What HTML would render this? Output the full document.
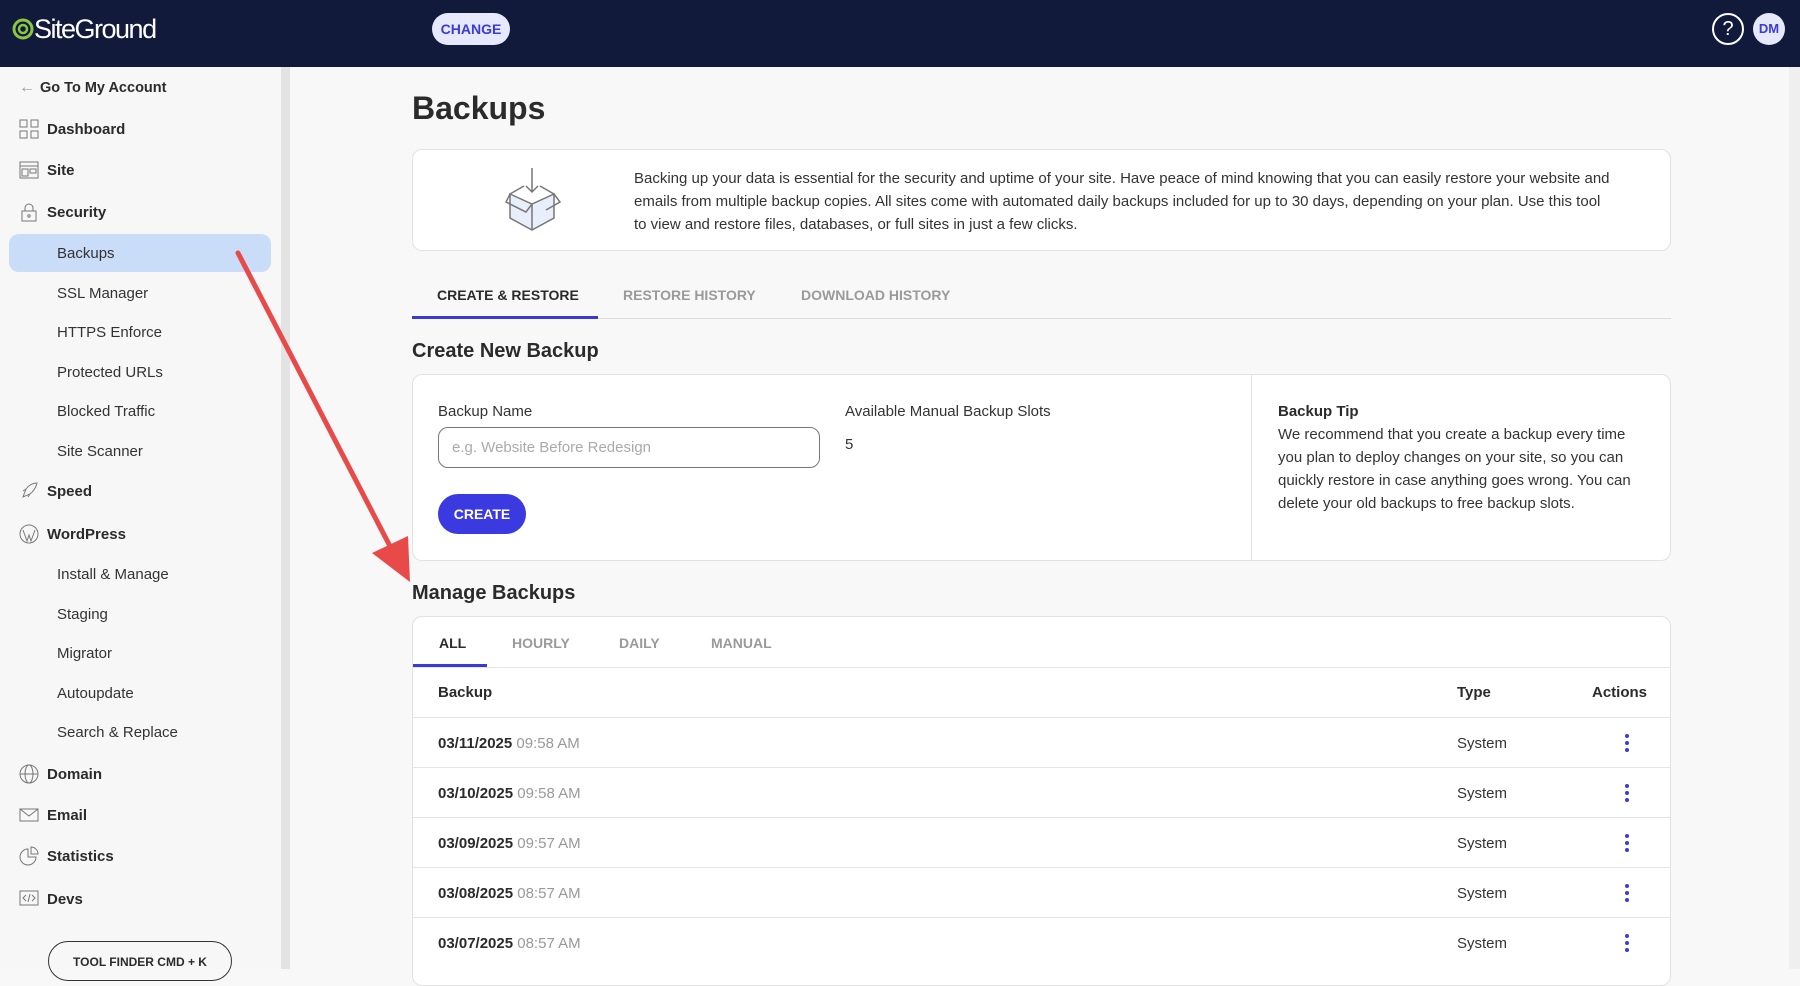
<!DOCTYPE html>
<html><head><meta charset="utf-8"><style>
*{margin:0;padding:0;box-sizing:border-box}
body{width:1800px;height:969px;overflow:hidden;background:#f8f8f8;font-family:"Liberation Sans",sans-serif;color:#2b2b2b;position:relative}
.a{position:absolute;white-space:nowrap}
.c{line-height:24px;height:24px;margin-top:-11px}
.hdr{left:0;top:0;width:1800px;height:67px;background:#111a3a}
.sb{left:0;top:67px;width:281px;height:902px;background:#f7f7f7}
.sbar{left:281px;top:67px;width:9px;height:902px;background:#e3e3e3}
.nav{font-weight:bold;font-size:15px;color:#2b2b2b;left:47px}
.sub{font-size:15px;color:#333;left:57px}
.ic{position:absolute;left:19px;width:20px;height:20px;margin-top:-10px}
.card{position:absolute;background:#fff;border:1px solid #e2e2e2;border-radius:10px}
.tab{font-size:14px;font-weight:bold;color:#9a9a9a}
.row{position:absolute;left:413px;width:1258px;height:1px;background:#e4e4e4}
.dt{font-size:15px;left:438px}
.dt b{color:#2b2b2b}.dt span{color:#999}
.sys{left:1457px;font-size:15px;color:#333}
.dots{left:1625px;width:4px}
.dots i{display:block;width:4px;height:4px;border-radius:2px;background:#3a3ae0;margin-bottom:3px}
</style></head><body>
<div class="a hdr"></div>
<div class="a" style="left:11px;top:14px;width:24px;height:30px">
<svg width="24" height="30" viewBox="0 0 24 30"><circle cx="12" cy="15" r="9" fill="none" stroke="#8cc63f" stroke-width="3"/><circle cx="12" cy="15" r="4" fill="none" stroke="#8cc63f" stroke-width="2.5"/></svg></div>
<div class="a" style="left:34px;top:14px;font-size:27px;color:#fff;letter-spacing:-1.5px">SiteGround</div>
<div class="a" style="left:432px;top:13px;width:78px;height:32px;border-radius:16px;background:#e6e8fb;color:#3a3ad6;font-weight:bold;font-size:14px;text-align:center;line-height:32px">CHANGE</div>
<div class="a" style="left:1712px;top:13px;width:32px;height:32px;border:2px solid #fff;border-radius:50%;color:#fff;text-align:center;line-height:28px;font-size:20px">?</div>
<div class="a" style="left:1753px;top:13px;width:32px;height:32px;border-radius:50%;background:#e6e8fb;color:#3a3ad6;text-align:center;line-height:32px;font-size:13px;font-weight:bold">DM</div>

<div class="a sb"></div><div class="a sbar"></div>
<div class="a c" style="left:19px;top:87px;color:#999;font-size:16px">←</div>
<div class="a c nav" style="left:40px;top:87px;font-size:14.5px">Go To My Account</div>
<div class="a" style="left:9px;top:234px;width:262px;height:38px;background:#c9dcf8;border-radius:10px"></div>

<svg class="ic" style="top:129px" viewBox="0 0 20 20" fill="none" stroke="#777"><rect x="1" y="1" width="7" height="7"/><rect x="12" y="1" width="7" height="7"/><rect x="1" y="12" width="7" height="7"/><rect x="12" y="12" width="7" height="7"/></svg>
<div class="a c nav" style="top:129px">Dashboard</div>
<svg class="ic" style="top:170px" viewBox="0 0 20 20" fill="none" stroke="#777"><rect x="1" y="2" width="18" height="16"/><line x1="1" y1="6" x2="19" y2="6"/><rect x="3" y="9" width="6" height="7"/><rect x="11" y="9" width="6" height="4"/></svg>
<div class="a c nav" style="top:170px">Site</div>
<svg class="ic" style="top:212px" viewBox="0 0 20 20" fill="none" stroke="#777"><rect x="3" y="9" width="14" height="10"/><path d="M6 9V6a4 4 0 0 1 8 0v3"/><circle cx="10" cy="14" r="1.2"/></svg>
<div class="a c nav" style="top:212px">Security</div>
<div class="a c sub" style="top:253px">Backups</div>
<div class="a c sub" style="top:293px">SSL Manager</div>
<div class="a c sub" style="top:332px">HTTPS Enforce</div>
<div class="a c sub" style="top:372px">Protected URLs</div>
<div class="a c sub" style="top:411px">Blocked Traffic</div>
<div class="a c sub" style="top:451px">Site Scanner</div>
<svg class="ic" style="top:491px" viewBox="0 0 20 20" fill="none" stroke="#777"><path d="M4 16l3-8c3-4 7-6 11-6-1 4-3 8-7 11z"/><path d="M4 10l3-2M9 16l2-3"/></svg>
<div class="a c nav" style="top:491px">Speed</div>
<svg class="ic" style="top:534px" viewBox="0 0 20 20" fill="none" stroke="#777"><circle cx="10" cy="10" r="9"/><path d="M4 6l4 11 2-6 2 6 4-11"/></svg>
<div class="a c nav" style="top:534px">WordPress</div>
<div class="a c sub" style="top:574px">Install &amp; Manage</div>
<div class="a c sub" style="top:614px">Staging</div>
<div class="a c sub" style="top:653px">Migrator</div>
<div class="a c sub" style="top:693px">Autoupdate</div>
<div class="a c sub" style="top:732px">Search &amp; Replace</div>
<svg class="ic" style="top:774px" viewBox="0 0 20 20" fill="none" stroke="#777"><circle cx="10" cy="10" r="9"/><ellipse cx="10" cy="10" rx="4" ry="9"/><line x1="1" y1="10" x2="19" y2="10"/></svg>
<div class="a c nav" style="top:774px">Domain</div>
<svg class="ic" style="top:815px" viewBox="0 0 20 20" fill="none" stroke="#777"><rect x="1" y="4" width="18" height="12"/><path d="M1 4l9 7 9-7"/></svg>
<div class="a c nav" style="top:815px">Email</div>
<svg class="ic" style="top:856px" viewBox="0 0 20 20" fill="none" stroke="#777"><path d="M9 3a8 8 0 1 0 8 8H9z"/><path d="M12 1v7h7a7 7 0 0 0-7-7z"/></svg>
<div class="a c nav" style="top:856px">Statistics</div>
<svg class="ic" style="top:899px" viewBox="0 0 20 20" fill="none" stroke="#777"><rect x="1" y="2" width="18" height="14"/><path d="M7 6l-3 3 3 3M13 6l3 3-3 3M11 5l-2 8"/></svg>
<div class="a c nav" style="top:899px">Devs</div>
<div class="a" style="left:48px;top:941px;width:184px;height:40px;border:1.5px solid #333;border-radius:20px;text-align:center;line-height:40px;font-size:12px;font-weight:bold">TOOL FINDER CMD + K</div>

<div class="a" style="left:1789px;top:67px;width:11px;height:902px;background:#efefef"></div>

<div class="a c" style="left:412px;top:107px;font-size:32px;font-weight:bold;line-height:40px;height:40px;margin-top:-19px">Backups</div>
<div class="card" style="left:412px;top:149px;width:1259px;height:102px"></div>
<svg class="a" style="left:500px;top:166px" width="64" height="68" viewBox="0 0 64 68" fill="none" stroke="#777" stroke-width="1.5"><path d="M32 2v24M26 20l6 6 6-6"/><path d="M10 28l22 10 22-10v24L32 64 10 52z" fill="#e9eefb"/><path d="M32 38v26"/><path d="M10 28l-4 8 20 10 6-8M54 28l6 8-14 8"/><path d="M10 28l14-8M54 28l-14-8"/></svg>
<div class="a" style="left:634px;top:167px;font-size:15px;line-height:23px;color:#333">Backing up your data is essential for the security and uptime of your site. Have peace of mind knowing that you can easily restore your website and<br>emails from multiple backup copies. All sites come with automated daily backups included for up to 30 days, depending on your plan. Use this tool<br>to view and restore files, databases, or full sites in just a few clicks.</div>

<div class="a" style="left:412px;top:318px;width:1259px;height:1px;background:#ddd"></div>
<div class="a" style="left:412px;top:316px;width:186px;height:3px;background:#3a3ad6"></div>
<div class="a c tab" style="left:437px;top:294px;color:#2b2b2b">CREATE &amp; RESTORE</div>
<div class="a c tab" style="left:623px;top:294px">RESTORE HISTORY</div>
<div class="a c tab" style="left:801px;top:294px">DOWNLOAD HISTORY</div>

<div class="a c" style="left:412px;top:350px;font-size:20px;font-weight:bold">Create New Backup</div>
<div class="card" style="left:412px;top:374px;width:1259px;height:187px"></div>
<div class="a" style="left:1251px;top:375px;width:1px;height:185px;background:#e2e2e2"></div>
<div class="a c" style="left:438px;top:411px;font-size:15px;color:#333">Backup Name</div>
<div class="a" style="left:438px;top:427px;width:382px;height:41px;border:1.5px solid #777;border-radius:10px;background:#fff;padding-left:13px;line-height:40px;font-size:15px;color:#aaa">e.g. Website Before Redesign</div>
<div class="a c" style="left:845px;top:411px;font-size:15px;color:#333">Available Manual Backup Slots</div>
<div class="a c" style="left:845px;top:444px;font-size:15px;color:#333">5</div>
<div class="a" style="left:438px;top:494px;width:88px;height:40px;border-radius:20px;background:#3a3ae0;color:#fff;font-weight:bold;font-size:14px;text-align:center;line-height:40px">CREATE</div>
<div class="a c" style="left:1278px;top:411px;font-size:15px;font-weight:bold">Backup Tip</div>
<div class="a" style="left:1278px;top:423px;font-size:15px;line-height:23px;color:#333">We recommend that you create a backup every time<br>you plan to deploy changes on your site, so you can<br>quickly restore in case anything goes wrong. You can<br>delete your old backups to free backup slots.</div>

<div class="a c" style="left:412px;top:592px;font-size:20px;font-weight:bold">Manage Backups</div>
<div class="card" style="left:412px;top:616px;width:1259px;height:370px"></div>
<div class="a c tab" style="left:439px;top:642px;color:#2b2b2b">ALL</div>
<div class="a c tab" style="left:512px;top:642px">HOURLY</div>
<div class="a c tab" style="left:619px;top:642px">DAILY</div>
<div class="a c tab" style="left:711px;top:642px">MANUAL</div>
<div class="a" style="left:413px;top:664px;width:74px;height:3px;background:#3a3ad6"></div>
<div class="row" style="top:667px"></div>
<div class="a c" style="left:438px;top:692px;font-size:15px;font-weight:bold">Backup</div>
<div class="a c" style="left:1457px;top:692px;font-size:15px;font-weight:bold">Type</div>
<div class="a c" style="left:1592px;top:692px;font-size:15px;font-weight:bold">Actions</div>
<div class="row" style="top:717px"></div>
<div class="a c dt" style="top:743px"><b>03/11/2025</b> <span>09:58 AM</span></div><div class="a c sys" style="top:743px">System</div>
<div class="a dots" style="top:734px"><i></i><i></i><i></i></div>
<div class="row" style="top:767px"></div>
<div class="a c dt" style="top:793px"><b>03/10/2025</b> <span>09:58 AM</span></div><div class="a c sys" style="top:793px">System</div>
<div class="a dots" style="top:784px"><i></i><i></i><i></i></div>
<div class="row" style="top:817px"></div>
<div class="a c dt" style="top:843px"><b>03/09/2025</b> <span>09:57 AM</span></div><div class="a c sys" style="top:843px">System</div>
<div class="a dots" style="top:834px"><i></i><i></i><i></i></div>
<div class="row" style="top:867px"></div>
<div class="a c dt" style="top:893px"><b>03/08/2025</b> <span>08:57 AM</span></div><div class="a c sys" style="top:893px">System</div>
<div class="a dots" style="top:884px"><i></i><i></i><i></i></div>
<div class="row" style="top:917px"></div>
<div class="a c dt" style="top:943px"><b>03/07/2025</b> <span>08:57 AM</span></div><div class="a c sys" style="top:943px">System</div>
<div class="a dots" style="top:934px"><i></i><i></i><i></i></div>

<svg class="a" style="left:0;top:0" width="1800" height="969"><line x1="238" y1="253" x2="393" y2="552" stroke="#e84a4a" stroke-width="5" stroke-linecap="round"/><polygon points="410,582 372,553 408,536" fill="#e84a4a"/></svg>
</body></html>
